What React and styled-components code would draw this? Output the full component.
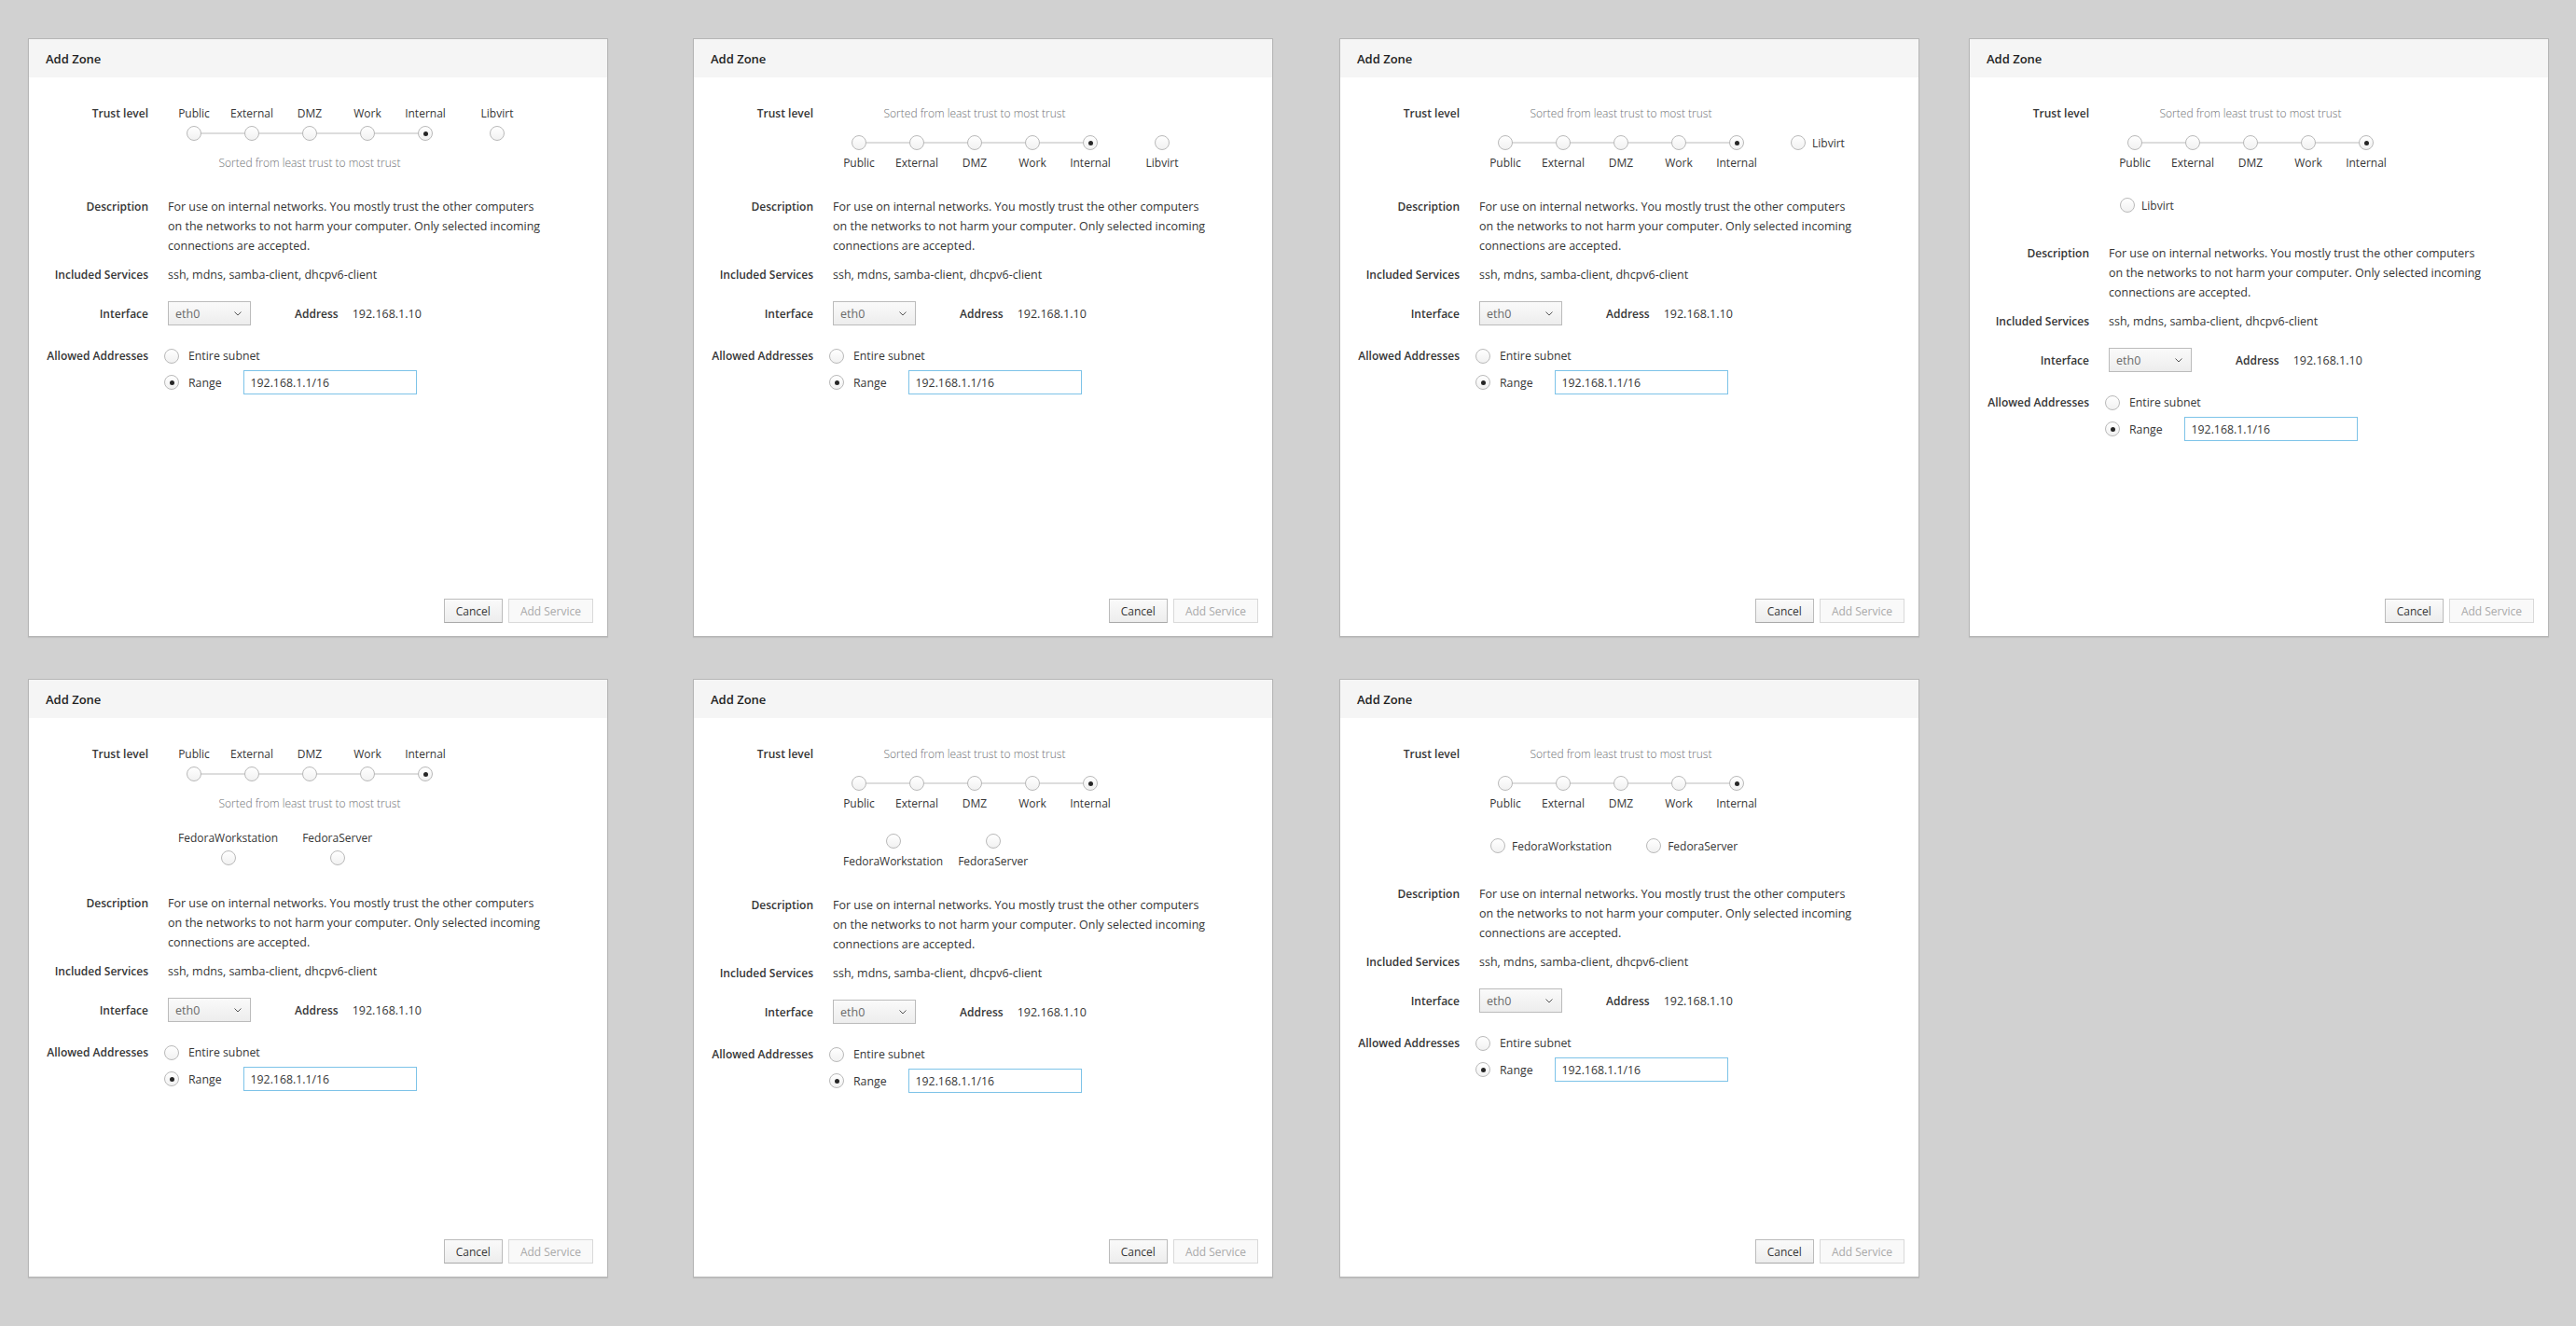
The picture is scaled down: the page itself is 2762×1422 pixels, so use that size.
import React from 'react';
import styled, { createGlobalStyle } from 'styled-components';

const GlobalStyle = createGlobalStyle`
  html, body {
    margin: 0;
    padding: 0;
    background: #d1d1d1;
  }
  body {
    font-family: "Open Sans", "Liberation Sans", sans-serif;
    font-size: 12px;
    color: #363636;
  }
  * { box-sizing: border-box; }
`;

const ZONES = ['Public', 'External', 'DMZ', 'Work', 'Internal'];
const DESCRIPTION =
  'For use on internal networks. You mostly trust the other computers on the networks to not harm your computer. Only selected incoming connections are accepted.';

// one entry per dialog in the screenshot
const VARIANTS = [
  { labelsAbove: true, extras: ['Libvirt'], mode: 'column-same' },
  { labelsAbove: false, extras: ['Libvirt'], mode: 'column-same' },
  { labelsAbove: false, extras: ['Libvirt'], mode: 'inline-same' },
  { labelsAbove: false, extras: ['Libvirt'], mode: 'inline-row' },
  { labelsAbove: true, extras: ['FedoraWorkstation', 'FedoraServer'], mode: 'column-row', gap: 14, mt: 6, pb: 1 },
  { labelsAbove: false, extras: ['FedoraWorkstation', 'FedoraServer'], mode: 'column-row', gap: 4, mt: 9, pb: 0 },
  { labelsAbove: false, extras: ['FedoraWorkstation', 'FedoraServer'], mode: 'inline-row' },
];

const Page = styled.div`
  display: grid;
  grid-template-columns: 713px 693px 675px 622px;
  row-gap: 45px;
  align-items: start;
  align-content: start;
  padding: 41px 0 0 30px;
  min-height: 1422px;
`;

const Dialog = styled.section`
  width: 622px;
  height: 642px;
  display: flex;
  flex-direction: column;
  background: #fff;
  border: 1px solid #b6b6b6;
  box-shadow: 0 1px 1px rgba(0, 0, 0, 0.08);
`;

const Header = styled.header`
  height: 41px;
  flex-shrink: 0;
  display: flex;
  align-items: center;
  padding: 0 18px;
  background: #f5f5f5;
`;

const Title = styled.h1`
  margin: 0;
  font-size: 13px;
  font-weight: 600;
  color: #1f1f1f;
`;

const Body = styled.div`
  flex: 1;
  display: flex;
  flex-direction: column;
  padding: 28px 18px 0;
`;

const Field = styled.div`
  display: flex;
  align-items: ${p => (p.$center ? 'center' : 'flex-start')};
  gap: 21px;
  margin-top: ${p => p.$mt || 0}px;
`;

const Label = styled.div`
  width: 110px;
  flex-shrink: 0;
  text-align: right;
  font-weight: 600;
  line-height: 21px;
  white-space: nowrap;
`;

const Value = styled.div`
  flex: 1;
  min-width: 0;
  font-size: 12.5px;
  line-height: 21px;
  display: flex;
  align-items: center;
`;

const Text = styled.p`
  margin: 0;
  max-width: ${p => p.$max || 'none'};
  line-height: 21px;
`;

const TrustBlock = styled.div`
  display: flex;
  flex-direction: column;
  gap: 10px;
`;

const Sorted = styled.div`
  width: 310px;
  margin-left: -3px;
  text-align: center;
  font-weight: 300;
  color: #6f7174;
  line-height: 21px;
  white-space: nowrap;
`;

const TrackRow = styled.div`
  display: flex;
  align-items: flex-start;
  gap: 15px;
  margin-left: -3px;
`;

const Track = styled.div`
  position: relative;
  display: flex;

  &::before {
    content: '';
    position: absolute;
    left: 31px;
    right: 31px;
    top: ${p => (p.$labelsAbove ? 31 : 10)}px;
    height: 2px;
    background: #dddddd;
  }
`;

const ZoneItem = styled.div`
  width: ${p => (p.$auto ? 'auto' : '62px')};
  padding: ${p => (p.$auto ? '0 6px' : '0')};
  display: flex;
  flex-direction: ${p => (p.$labelsAbove ? 'column' : 'column-reverse')};
  align-items: center;
`;

const ZoneName = styled.span`
  line-height: 21px;
  white-space: nowrap;
`;

const RadioBox = styled.span`
  position: relative;
  z-index: 1;
  height: 22px;
  display: flex;
  align-items: center;
  justify-content: center;
`;

const Radio = styled.span`
  width: 16px;
  height: 16px;
  flex-shrink: 0;
  border-radius: 50%;
  border: 1px solid #b9b9b9;
  background: linear-gradient(#ffffff, #f1f1f1);
  display: inline-flex;
  align-items: center;
  justify-content: center;

  &::after {
    content: '';
    display: ${p => (p.$checked ? 'block' : 'none')};
    width: 5px;
    height: 5px;
    border-radius: 50%;
    background: #262626;
  }
`;

const InlineOption = styled.div`
  height: 22px;
  display: flex;
  align-items: center;
  gap: 7px;
  margin: 0 10px 0 12px;
  white-space: nowrap;
`;

const ExtraRow = styled.div`
  display: flex;
  align-items: flex-start;
  gap: ${p => p.$gap || 15}px;
  margin-left: ${p => p.$ml || 0}px;
  margin-top: ${p => p.$mt || 0}px;
  padding-bottom: ${p => p.$pb || 0}px;
`;

const Select = styled.div`
  width: 89px;
  height: 26px;
  display: flex;
  align-items: center;
  justify-content: space-between;
  padding: 0 9px 0 7px;
  border: 1px solid #bbbbbb;
  background: linear-gradient(#fafafa, #ededed);
  color: #6a6a6a;
`;

const InlineLabel = styled.span`
  font-size: 12px;
  font-weight: 600;
  margin-left: ${p => p.$ml || 0}px;
`;

const InlineValue = styled.span`
  margin-left: ${p => p.$ml || 0}px;
`;

const RadioList = styled.div`
  display: flex;
  flex-direction: column;
  gap: 5px;
  font-size: 12.3px;
`;

const RadioOption = styled.label`
  height: ${p => p.$h || 21}px;
  display: flex;
  align-items: center;
  gap: 10px;
  margin-left: -4px;
`;

const RangeInput = styled.input`
  width: 186px;
  height: 26px;
  margin-left: 13px;
  padding: 0 7px;
  border: 1px solid #7dc3e8;
  font: inherit;
  color: #363636;
  outline: none;
`;

const Footer = styled.footer`
  display: flex;
  justify-content: flex-end;
  gap: 6px;
  padding: 0 15px 14px;
`;

const Button = styled.button`
  height: 26px;
  padding: 0 12px;
  font: inherit;
  border: 1px solid ${p => (p.disabled ? '#d9d9d9' : '#bbbbbb')};
  border-bottom-color: ${p => (p.disabled ? '#d9d9d9' : '#a9a9a9')};
  background: ${p => (p.disabled ? '#f9f9f9' : 'linear-gradient(#fafafa, #ededed)')};
  color: ${p => (p.disabled ? '#a9a9a9' : '#363636')};
`;

const Chevron = () => (
  <svg width="8" height="5" viewBox="0 0 8 5" fill="none">
    <polyline points="0.5,0.5 4,4 7.5,0.5" stroke="#555" strokeWidth="1" />
  </svg>
);

const ColumnZone = ({ name, checked, labelsAbove, auto }) => (
  <ZoneItem $labelsAbove={labelsAbove} $auto={auto}>
    <ZoneName>{name}</ZoneName>
    <RadioBox>
      <Radio $checked={checked} />
    </RadioBox>
  </ZoneItem>
);

const InlineZone = ({ name }) => (
  <InlineOption>
    <Radio />
    <span>{name}</span>
  </InlineOption>
);

const TrustLevel = ({ v }) => {
  const sorted = <Sorted>Sorted from least trust to most trust</Sorted>;
  const sameRow = v.mode === 'column-same' || v.mode === 'inline-same';

  return (
    <TrustBlock>
      {!v.labelsAbove && sorted}
      <TrackRow>
        <Track $labelsAbove={v.labelsAbove}>
          {ZONES.map(z => (
            <ColumnZone key={z} name={z} checked={z === 'Internal'} labelsAbove={v.labelsAbove} />
          ))}
        </Track>
        {sameRow &&
          v.extras.map(z =>
            v.mode === 'inline-same' ? (
              <InlineZone key={z} name={z} />
            ) : (
              <ColumnZone key={z} name={z} labelsAbove={v.labelsAbove} />
            )
          )}
      </TrackRow>
      {v.labelsAbove && sorted}
      {v.mode === 'column-row' && (
        <ExtraRow $gap={v.gap} $ml={5} $mt={v.mt} $pb={v.pb}>
          {v.extras.map(z => (
            <ColumnZone key={z} name={z} labelsAbove={v.labelsAbove} auto />
          ))}
        </ExtraRow>
      )}
      {v.mode === 'inline-row' && (
        <ExtraRow $gap={15} $mt={14} $pb={4}>
          {v.extras.map(z => (
            <InlineZone key={z} name={z} />
          ))}
        </ExtraRow>
      )}
    </TrustBlock>
  );
};

const AddZoneDialog = ({ v }) => (
  <Dialog>
    <Header>
      <Title>Add Zone</Title>
    </Header>
    <Body>
      <Field>
        <Label>Trust level</Label>
        <div>
          <TrustLevel v={v} />
        </div>
      </Field>

      <Field $mt={26}>
        <Label>Description</Label>
        <Value>
          <Text $max="405px">{DESCRIPTION}</Text>
        </Value>
      </Field>

      <Field $mt={10}>
        <Label>Included Services</Label>
        <Value>ssh, mdns, samba-client, dhcpv6-client</Value>
      </Field>

      <Field $mt={18} $center>
        <Label>Interface</Label>
        <Value>
          <Select>
            <span>eth0</span>
            <Chevron />
          </Select>
          <InlineLabel $ml={47}>Address</InlineLabel>
          <InlineValue $ml={15}>192.168.1.10</InlineValue>
        </Value>
      </Field>

      <Field $mt={22}>
        <Label>Allowed Addresses</Label>
        <RadioList>
          <RadioOption>
            <Radio />
            <span>Entire subnet</span>
          </RadioOption>
          <RadioOption $h={26}>
            <Radio $checked />
            <span>Range</span>
            <RangeInput defaultValue="192.168.1.1/16" />
          </RadioOption>
        </RadioList>
      </Field>
    </Body>
    <Footer>
      <Button>Cancel</Button>
      <Button disabled>Add Service</Button>
    </Footer>
  </Dialog>
);

const App = () => (
  <>
    <GlobalStyle />
    <Page>
      {VARIANTS.map((v, i) => (
        <AddZoneDialog key={i} v={v} />
      ))}
    </Page>
  </>
);

export default App;
